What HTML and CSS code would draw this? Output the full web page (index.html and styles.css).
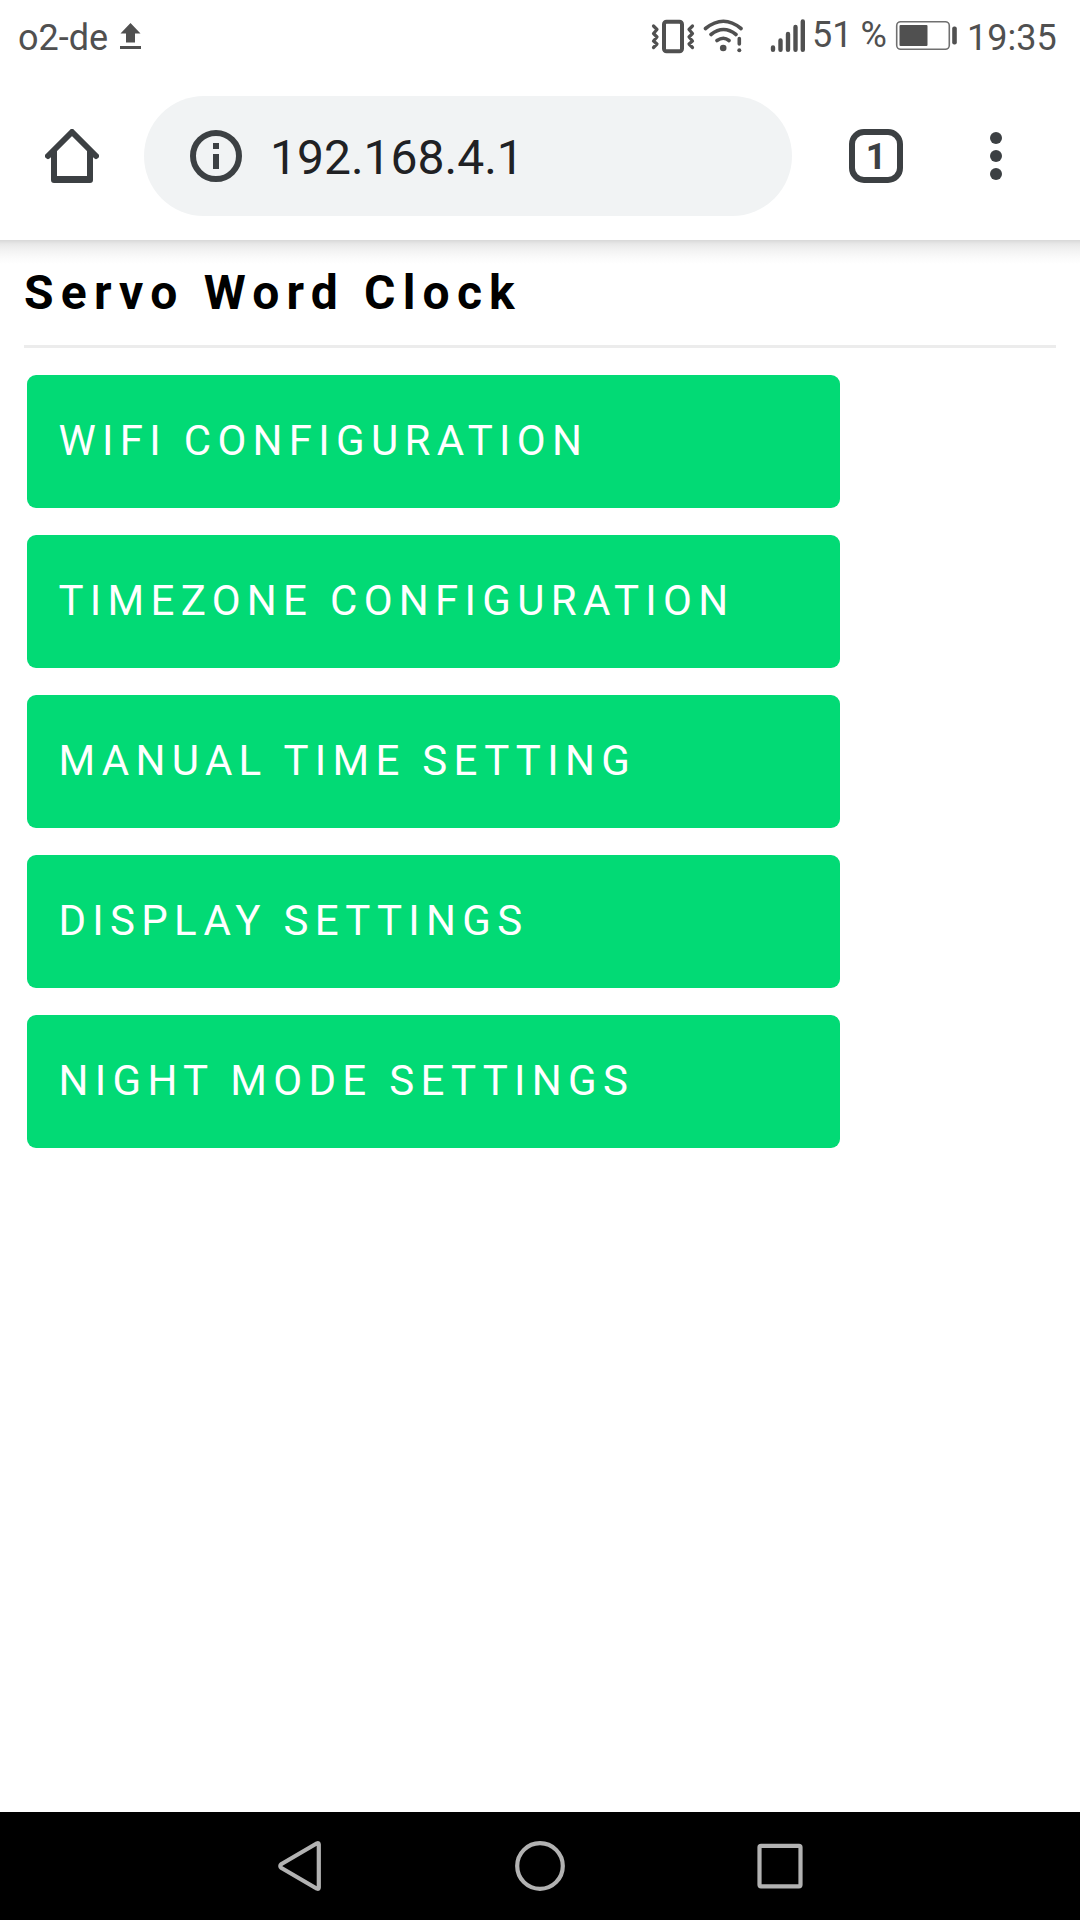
FILE: index.html
```html
<!DOCTYPE html>
<html lang="en">
<head>
<meta charset="utf-8">
<title>Servo Word Clock</title>
<link rel="stylesheet" href="styles.css">
</head>
<body>
<div class="phone">
  <header class="status">
    <span class="carrier">o2-de</span>
    <svg class="upload" width="22" height="28" viewBox="119 22 22 28"><path d="M130.500 23l10 10.500h-5.500v9h-9v-9h-5.500zM120 46h21v3h-21z" fill="#505050"/></svg>
    <div class="indicators">
      <svg width="44" height="36" viewBox="651 18 44 36" fill="none" stroke="#505050" stroke-linecap="round" stroke-linejoin="round">
        <rect x="664" y="21.800" width="18" height="29.500" rx="2.500" stroke-width="4"/>
        <path d="M653.500 26l3.500 3.500-3.500 4 3.500 3.500-3.500 4 3.500 3-3.500 3.500M692.500 26l-3.500 3.500 3.500 4-3.500 3.500 3.500 4-3.500 3 3.500 3.500" stroke-width="3.200"/>
      </svg>
      <svg class="wifi" width="42" height="36" viewBox="702 18 42 36" fill="none" stroke="#505050" stroke-width="3.600" stroke-linecap="round">
        <path d="M705.500 28.500q18-14.500 35.500 0M711 34.500q12.500-10 25 0M717 40.500q6.500-4.500 12 0M739.300 38.500v5.500"/>
        <circle cx="723.200" cy="48" r="3.300" fill="#505050" stroke="none"/>
        <circle cx="739.300" cy="50.200" r="2" fill="#505050" stroke="none"/>
      </svg>
      <svg class="signal" width="36" height="36" viewBox="770 18 36 36" stroke="#505050" stroke-width="4.400" stroke-linecap="round"><path d="M773 47.500v2.300M780.500 40.500v9.300M788 34v15.800M795.500 27v22.800M802.800 21.500v28.300"/></svg>
      <span class="percent">51 %</span>
      <svg class="battery" width="62" height="32" viewBox="895 20 62 32">
        <rect x="896.700" y="21.700" width="52.600" height="27.600" rx="4" fill="none" stroke="#707070" stroke-width="1.600"/>
        <rect x="899.500" y="25" width="28" height="21" rx="1" fill="#505050"/>
        <rect x="952.200" y="26.500" width="4.600" height="18" rx="2" fill="#505050"/>
      </svg>
      <span class="time">19:35</span>
    </div>
  </header>
  <nav class="toolbar">
    <svg class="home" width="54" height="54" viewBox="0 0 54 54" fill="none" stroke="#3c4043" stroke-width="6" stroke-linecap="round" stroke-linejoin="round"><path d="M3 27L27 3l24 24M9 22v29h36V22"/><path d="M9 50h36" stroke-linecap="butt"/></svg>
    <div class="address">
      <svg width="52" height="52" viewBox="0 0 52 52"><circle cx="26" cy="26" r="23" fill="none" stroke="#3c4043" stroke-width="6"/><path d="M23 13h6v6h-6zM23 24h6v15h-6z" fill="#3c4043"/></svg>
      <span class="url">192.168.4.1</span>
    </div>
    <span class="tabs">1</span>
    <svg class="more" width="12" height="48" viewBox="0 0 12 48" fill="#3c4043"><circle cx="6" cy="6" r="6"/><circle cx="6" cy="24" r="6"/><circle cx="6" cy="42" r="6"/></svg>
  </nav>
  <main class="page">
    <h1>Servo Word Clock</h1>
    <div class="menu">
      <a class="button">WIFI CONFIGURATION</a>
      <a class="button">TIMEZONE CONFIGURATION</a>
      <a class="button">MANUAL TIME SETTING</a>
      <a class="button">DISPLAY SETTINGS</a>
      <a class="button">NIGHT MODE SETTINGS</a>
    </div>
  </main>
  <footer class="keys">
    <svg width="1080" height="108" viewBox="0 1812 1080 108" fill="none" stroke="#b2b2b2" stroke-width="4.200" stroke-linejoin="round">
      <path d="M317 1843.300q1.800-.800 1.800 1.200v43q0 2-1.800 1.200L281.500 1868q-2.500-2 0-4z"/>
      <circle cx="540" cy="1866" r="22.800"/>
      <rect x="759.500" y="1845.800" width="41" height="40.500" rx="1.500"/>
    </svg>
  </footer>
</div>
</body>
</html>
```
FILE: styles.css
```css
* { box-sizing: border-box; }
body { margin: 0; background: #fff; font-family: Roboto, sans-serif; }
svg { display: block; flex: none; }
.phone { width: 1080px; height: 1920px; display: flex; flex-direction: column; overflow: hidden; }

.status { height: 72px; display: flex; align-items: flex-start; padding-left: 18px; color: #505050; font-size: 36px; line-height: 42px; white-space: nowrap; }
.carrier { flex: none; width: 101px; padding-top: 17px; }
.upload { margin-top: 22px; }
.indicators { flex: 1; display: flex; align-items: flex-start; padding: 18px 0 0 510px; }
.wifi { margin-left: 7px; }
.signal { margin-left: 26px; }
.percent { flex: none; width: 83px; margin: -4px 0 0 6px; word-spacing: -1px; }
.battery { margin-top: 2px; }
.time { margin: -1px 0 0 10px; }

.toolbar { height: 168px; display: flex; align-items: center; padding: 0 78px 0 45px; }
.address { width: 648px; height: 120px; margin-left: 45px; padding-left: 46px; display: flex; align-items: center; border-radius: 60px; background: #f1f3f4; }
.url { margin-left: 28px; padding-top: 2px; font-size: 48px; color: #202124; }
.tabs { width: 54px; height: 54px; margin-left: 57px; padding-top: 2px; display: flex; align-items: center; justify-content: center; border: 6px solid #3c4043; border-radius: 15px; color: #3c4043; font-size: 36px; font-weight: 700; }
.more { margin-left: auto; }

.page { flex: 1; padding: 24px 24px 0; background: linear-gradient(#d8d8d8, #e8e8e8 4px, #f2f2f2 10px, #fafafa 17px, #fff 24px) no-repeat top / 100% 24px; }
h1 { margin: 0; height: 84px; padding-top: 1px; border-bottom: 3px solid #ececec; font-size: 48px; line-height: 56px; letter-spacing: 0.15em; color: #000; }
.menu { display: flex; flex-direction: column; gap: 27px; padding: 27px 3px; }
.button { width: 813px; height: 133px; padding: 0 31.5px 2px; display: flex; align-items: center; border-radius: 9px; background: #02da75; color: #fff; font-size: 42px; letter-spacing: 0.15em; white-space: nowrap; }

.keys { height: 108px; background: #000; }
```
